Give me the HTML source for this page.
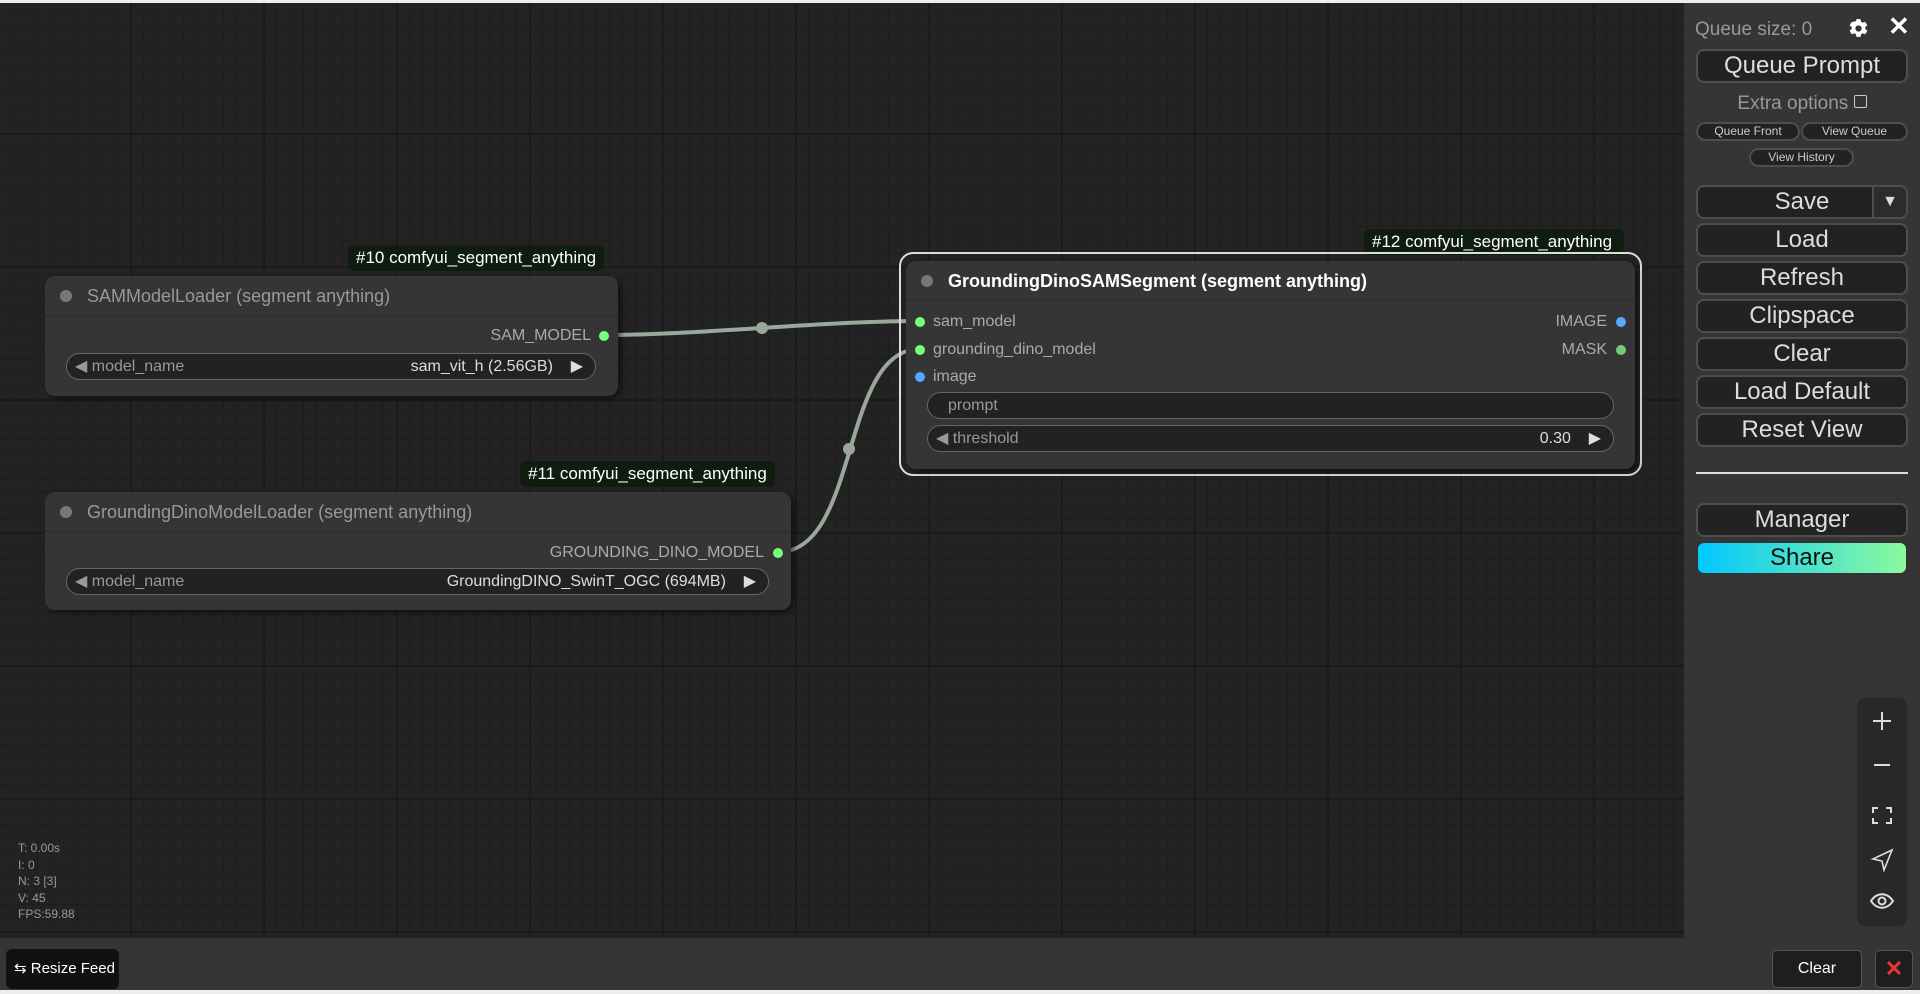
<!DOCTYPE html>
<html><head><meta charset="utf-8"><style>
*{box-sizing:border-box;margin:0;padding:0}
body{width:1920px;height:994px;overflow:hidden;background:#222;font-family:"Liberation Sans",Arial,sans-serif;position:relative}
#top{position:absolute;left:0;top:0;width:1920px;height:3px;background:#eee}
#canvas{position:absolute;left:0;top:3px;width:1684px;height:935px;background-color:#232323;
background-image:linear-gradient(#1b1b1b 2px,transparent 2px),linear-gradient(90deg,#1b1b1b 2px,transparent 2px),linear-gradient(#1d1d1d 1px,transparent 1px),linear-gradient(90deg,#1d1d1d 1px,transparent 1px);
background-size:133px 133px,133px 133px,13.3px 13.3px,13.3px 13.3px;background-position:-3px -3px}
.abs{position:absolute}
.node{position:absolute;background:#353535;border-radius:10px;box-shadow:3px 3px 6px rgba(0,0,0,.5)}
.title{position:absolute;left:0;top:0;right:0;height:40px;border-bottom:1px solid #2b2b2b;font-size:18px;color:#999;line-height:40px;padding-left:42px;white-space:nowrap}
.title .d{position:absolute;left:15px;top:14px;width:12px;height:12px;border-radius:50%;background:#777}
.badge{position:absolute;background:#0e1d10;color:#fff;font-size:17px;border-radius:6px;line-height:26px;padding:0 7px;white-space:nowrap}
.slot{position:absolute;font-size:16px;color:#aaa;white-space:nowrap;line-height:20px}
.dot{position:absolute;width:10px;height:10px;border-radius:50%}
.w{position:absolute;background:#222;border:1px solid #666;border-radius:14px;font-size:16px;color:#999;line-height:25px;white-space:nowrap}
.w .l{position:absolute;left:8px;top:0}
.w .r{position:absolute;right:12px;top:0;color:#ddd}
#panel{position:absolute;left:1684px;top:3px;width:236px;height:935px;background:#353535}
.btn{position:absolute;left:12px;width:212px;height:34px;background:#222;border:2px solid #4e4e4e;border-radius:8px;color:#ddd;font-size:24px;text-align:center;line-height:30px}
.sb{position:absolute;height:19px;background:#222;border:2px solid #4e4e4e;border-radius:10px;color:#ccc;font-size:12px;text-align:center;line-height:15px}
#bottom{position:absolute;left:0;top:938px;width:1920px;height:52px;background:#353535}
#bl{position:absolute;left:0;top:990px;width:1920px;height:4px;background:#eee}
</style></head><body>
<div id="top"></div>
<div id="canvas"></div>

<svg class="abs" style="left:0;top:0" width="1684" height="938">
<path d="M604 335 C 700 335, 820 321, 920 321" stroke="#9aa89a" stroke-width="4" fill="none"/>
<circle cx="762" cy="328" r="6" fill="#9aa89a"/>
<path d="M778 552 C 860 552, 840 349, 920 349" stroke="#9aa89a" stroke-width="4" fill="none"/>
<circle cx="849" cy="449" r="6" fill="#9aa89a"/>
</svg>

<!-- node 10 -->
<div class="badge" style="left:348px;top:245px;padding:0 8px">#10 comfyui_segment_anything</div>
<div class="node" style="left:45px;top:276px;width:573px;height:120px">
<div class="title"><span class="d"></span>SAMModelLoader (segment anything)</div>
<div class="slot" style="right:27px;top:50px">SAM_MODEL</div>
<div class="dot" style="left:554px;top:55px;background:#7f7"></div>
<div class="w" style="left:21px;top:77px;width:530px;height:27px"><span class="l">◀ model_name</span><span class="r">sam_vit_h (2.56GB) &nbsp;&nbsp; ▶</span></div>
</div>

<!-- node 11 -->
<div class="badge" style="left:520px;top:461px;padding:0 8px">#11 comfyui_segment_anything</div>
<div class="node" style="left:45px;top:492px;width:746px;height:118px">
<div class="title"><span class="d"></span>GroundingDinoModelLoader (segment anything)</div>
<div class="slot" style="right:27px;top:51px">GROUNDING_DINO_MODEL</div>
<div class="dot" style="left:728px;top:56px;background:#7f7"></div>
<div class="w" style="left:21px;top:76px;width:703px;height:27px"><span class="l">◀ model_name</span><span class="r">GroundingDINO_SwinT_OGC (694MB) &nbsp;&nbsp; ▶</span></div>
</div>

<!-- node 12 -->
<div class="badge" style="left:1364px;top:229px;padding:0 12px 0 8px">#12 comfyui_segment_anything</div>
<div class="abs" style="left:899px;top:252px;width:743px;height:224px;border:2px solid #ddd;border-radius:14px"></div>
<div class="node" style="left:906px;top:261px;width:729px;height:208px">
<div class="title" style="color:#fff;font-weight:bold"><span class="d"></span>GroundingDinoSAMSegment (segment anything)</div>
<div class="dot" style="left:9px;top:56px;background:#7f7"></div><div class="slot" style="left:27px;top:51px">sam_model</div>
<div class="dot" style="left:9px;top:84px;background:#7f7"></div><div class="slot" style="left:27px;top:79px">grounding_dino_model</div>
<div class="dot" style="left:9px;top:111px;background:#5af"></div><div class="slot" style="left:27px;top:106px">image</div>
<div class="slot" style="right:28px;top:51px">IMAGE</div><div class="dot" style="left:710px;top:56px;background:#5af"></div>
<div class="slot" style="right:28px;top:79px">MASK</div><div class="dot" style="left:710px;top:84px;background:#7c7"></div>
<div class="w" style="left:21px;top:131px;width:687px;height:27px"><span class="l" style="left:20px">prompt</span></div>
<div class="w" style="left:21px;top:164px;width:687px;height:27px"><span class="l">◀ threshold</span><span class="r">0.30 &nbsp;&nbsp; ▶</span></div>
</div>

<div class="abs" style="left:18px;top:840px;font-size:12px;color:#999;line-height:16.5px">T: 0.00s<br>I: 0<br>N: 3 [3]<br>V: 45<br>FPS:59.88</div>

<!-- panel -->
<div id="panel">
<div class="abs" style="left:11px;top:16px;font-size:19px;color:#999">Queue size: 0</div>
<svg class="abs" style="left:162px;top:13px" width="25" height="25" viewBox="0 0 24 24"><path fill="#fff" d="M12 8a4 4 0 100 8 4 4 0 000-8zm9.4 5.5l2-1.5-2-3.5-2.4.9a8 8 0 00-1.7-1L17 6h-4l-.4 2.4a8 8 0 00-1.7 1L8.5 8.5l-2 3.5 2 1.5a8 8 0 000 2l-2 1.5 2 3.5 2.4-.9a8 8 0 001.7 1L13 23h4l.4-2.4a8 8 0 001.7-1l2.4.9 2-3.5-2-1.5a8 8 0 000-2z" transform="translate(-3,-3)"/><circle cx="12" cy="12" r="3" fill="#353535"/></svg>
<div class="abs" style="left:204px;top:8px;font-size:26px;color:#fff;font-weight:bold">✕</div>
<div class="btn" style="top:46px">Queue Prompt</div>
<div class="abs" style="left:0;width:236px;top:90px;text-align:center;font-size:19px;color:#999">Extra options <span style="display:inline-block;width:13px;height:13px;border:1px solid #ccc;border-radius:2px;vertical-align:1px"></span></div>
<div class="sb" style="left:12px;top:119px;width:104px">Queue Front</div>
<div class="sb" style="left:117px;top:119px;width:107px">View Queue</div>
<div class="sb" style="left:65px;top:145px;width:105px">View History</div>
<div class="btn" style="top:182px">Save<span style="position:absolute;right:0;top:0;width:34px;height:30px;border-left:2px solid #4e4e4e;font-size:16px;background:#2c2c2c;border-radius:0 6px 6px 0">▼</span></div>
<div class="btn" style="top:220px">Load</div>
<div class="btn" style="top:258px">Refresh</div>
<div class="btn" style="top:296px">Clipspace</div>
<div class="btn" style="top:334px">Clear</div>
<div class="btn" style="top:372px">Load Default</div>
<div class="btn" style="top:410px">Reset View</div>
<div class="abs" style="left:12px;top:469px;width:212px;height:2px;background:#ddd"></div>
<div class="btn" style="top:500px">Manager</div>
<div class="btn" style="top:538px;background:linear-gradient(90deg,#00c8ff,#8dfa9c);color:#111;border-color:#333">Share</div>
<div class="abs" style="left:173px;top:695px;width:50px;height:228px;background:#282828;border-radius:8px">
<svg width="50" height="228" fill="none" stroke="#ddd" stroke-width="2">
<path d="M25 14v18M16 23h18"/>
<path d="M17 67h16"/>
<path d="M16 115v-5h5M29 110h5v5M34 120v5h-5M21 125h-5v-5"/>
<path d="M35 152l-19 9 9 2 2 9z" stroke-width="1.6"/>
<path d="M14 203c6-9 16-9 22 0c-6 9-16 9-22 0z"/><circle cx="25" cy="203" r="3.5"/>
</svg></div>
</div>

<div id="bottom">
<div class="abs" style="left:6px;top:11px;width:113px;height:40px;background:#111;border-radius:6px;color:#fff;font-size:15px;line-height:40px;padding-left:8px">⇆ Resize Feed</div>
<div class="abs" style="left:1772px;top:12px;width:90px;height:38px;background:#1e1e1e;border:1px solid #555;border-radius:5px;color:#fff;font-size:16px;text-align:center;line-height:36px">Clear</div>
<div class="abs" style="left:1875px;top:12px;width:38px;height:38px;background:#1e1e1e;border:1px solid #555;border-radius:5px;color:#e33;font-size:22px;text-align:center;line-height:36px;font-weight:bold">✕</div>
</div>
<div id="bl"></div>
</body></html>
